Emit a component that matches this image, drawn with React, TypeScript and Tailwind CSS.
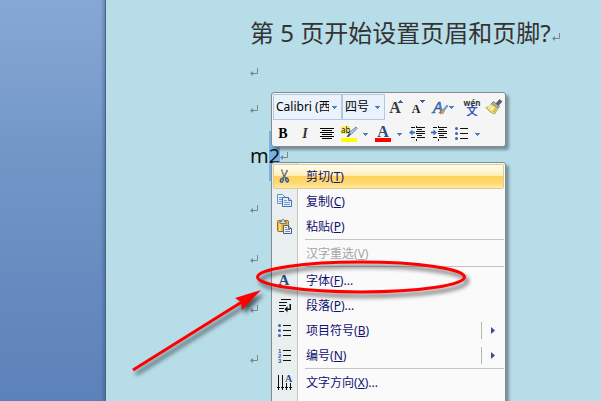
import type { ReactNode } from "react";

type MenuEntry = {
  label: string;
  accessKey: string;
  suffix?: string;
  icon?: ReactNode;
  active?: boolean;
  disabled?: boolean;
  submenu?: boolean;
  separatorAfter?: boolean;
};

function Icon({ children }: { children: ReactNode }) {
  return (
    <svg className="size-4 shrink-0 overflow-visible" viewBox="0 0 16 16" aria-hidden="true">
      {children}
    </svg>
  );
}

function LetterA({ x = 8, y = 12, size = 15, fill = "#2b4a80" }) {
  return (
    <text
      x={x}
      y={y}
      fontSize={size}
      fill={fill}
      textAnchor="middle"
      fontWeight="bold"
      fontFamily="Liberation Serif, serif"
    >
      A
    </text>
  );
}

function Caret() {
  return (
    <svg className="h-[3px] w-[5px] shrink-0" viewBox="0 0 5 3" aria-hidden="true">
      <path d="M0 0h5v1H4v1H3v1H2V2H1V1H0z" fill="#4a7fc0" />
    </svg>
  );
}

function ReturnMark() {
  return (
    <svg className="size-2 shrink-0" viewBox="0 0 8 8" fill="none" aria-hidden="true">
      <path d="M7.500 0v5.500H2" stroke="#7c868b" />
      <path d="M3 3v5L0 5.500z" fill="#7c868b" />
    </svg>
  );
}

/* Toolbar icons */

const GrowIcon = (
  <Icon>
    <LetterA x={7} y={14} size={16} fill="#3a3a3a" />
    <path d="M10 4h5v-1h-1v-1h-1V1h-1v1h-1v1h-1z" fill="#3a5fa8" />
  </Icon>
);

const ShrinkIcon = (
  <Icon>
    <LetterA x={6} y={14} size={12} fill="#222" />
    <path d="M10 1h5v1h-1v1h-1v1h-1V3h-1V2h-1z" fill="#3a5fa8" />
  </Icon>
);

const StyleIcon = (
  <Icon>
    <text
      x="6"
      y="14"
      fontSize="17"
      fontStyle="italic"
      textAnchor="middle"
      fontFamily="Liberation Serif, serif"
      fill="#5b8fd0"
      stroke="#2f5c9e"
      strokeWidth=".6"
    >
      A
    </text>
    <path d="M15 6l1 1-4 5-1.500-1z" fill="#7db0ea" stroke="#2f5c9e" strokeWidth=".5" />
    <path d="M10.500 10.500l2 1.500c0 2-2.500 3-4.500 3 1.500-1 1-3.500 2.500-4.500z" fill="#e5a73a" stroke="#a9772a" strokeWidth=".4" />
  </Icon>
);

const PinyinIcon = (
  <Icon>
    <text
      x="8"
      y="7"
      fontSize="8"
      fontWeight="bold"
      textAnchor="middle"
      fontFamily="Noto Sans, sans-serif"
      fill="#333"
    >
      wén
    </text>
    <text
      x="8"
      y="16"
      fontSize="11"
      textAnchor="middle"
      fontFamily="Noto Sans CJK SC, sans-serif"
      fill="#2340b8"
      stroke="#2340b8"
      strokeWidth=".3"
    >
      文
    </text>
  </Icon>
);

const BrushIcon = (
  <Icon>
    <path d="M13.500 0.500l2.500 2-3.500 4-2.500-2z" fill="#59616e" stroke="#343b48" strokeWidth=".5" />
    <path d="M7.500 2.500l6 5-1.500 2L5.500 4.500z" fill="#a9afba" stroke="#444b59" strokeWidth=".6" />
    <path d="M5.500 4.500L12 9.500 8.500 15C5 14 2 11.500 0 8.500c2.500-.5 4-1.500 5.500-4z" fill="#ecd76c" stroke="#94803c" strokeWidth=".6" />
    <path d="M5 6.500L2.500 9M7.500 8L5 11" stroke="#fffbe0" strokeWidth="1.500" />
    <path d="M10 9.500L7.500 13" stroke="#c9a531" />
  </Icon>
);

const CenterIcon = (
  <Icon>
    <path
      d="M1 2.500h14M3 4.500h10M1 6.500h14M3 8.500h10M1 10.500h14M3 12.500h10"
      stroke="#000"
    />
  </Icon>
);

const HighlightIcon = (
  <Icon>
    <rect width="9" height="8" fill="#f6f264" />
    <text x="0" y="7" fontSize="8" fontFamily="Noto Sans, sans-serif" fill="#111">
      ab
    </text>
    <path d="M15 1l1 1.500-6 6-2-1.500z" fill="#b9d1ec" stroke="#4a6590" strokeWidth=".8" />
    <path d="M8 7L10 8.500 7.500 11H5.500z" fill="#45556b" />
    <rect y="12" width="16" height="4" fill="#ff0" />
  </Icon>
);

const FontColorIcon = (
  <Icon>
    <LetterA y={11} size={16} />
    <rect y="12" width="16" height="4" fill="#f00" />
  </Icon>
);

const indentLines =
  "M7.500 0v2M7.500 13v2M2 1.500h4M8 1.500h8M8 3.500h5M7 5.500h9M7 7.500h9M8 9.500h5M2 11.500h4M8 11.500h8";

const OutdentIcon = (
  <Icon>
    <path d={indentLines} stroke="#111" />
    <path d="M0 6.500L3.500 3.500v2H6v2H3.500v2z" fill="#3d6fc0" />
  </Icon>
);

const IndentIcon = (
  <Icon>
    <path d={indentLines} stroke="#111" />
    <path d="M6 6.500L2.500 3.500v2H0v2h2.500v2z" fill="#3d6fc0" />
  </Icon>
);

const BulletsIcon = (
  <Icon>
    <path d="M7 2.500h8M7 7.500h8M7 12.500h8" stroke="#111" />
    <circle cx="3.500" cy="2.500" r="1.500" fill="#3a63b0" />
    <circle cx="3.500" cy="7.500" r="1.500" fill="#3a63b0" />
    <circle cx="3.500" cy="12.500" r="1.500" fill="#3a63b0" />
  </Icon>
);

/* Menu icons */

const CutIcon = (
  <Icon>
    <path d="M5.500 0.500L8 7l2 2.500M11.500 1L8.500 7 6.500 9.500" fill="none" stroke="#66707e" strokeWidth="1.600" />
    <path d="M6 1.500L8 6" fill="none" stroke="#c7ced8" strokeWidth=".6" />
    <ellipse cx="5.800" cy="11.300" rx="1.300" ry="1.900" transform="rotate(20 5.800 11.300)" fill="none" stroke="#2f5a9c" strokeWidth="1.500" />
    <ellipse cx="11" cy="11" rx="1.300" ry="1.900" transform="rotate(-25 11 11)" fill="none" stroke="#2f5a9c" strokeWidth="1.500" />
  </Icon>
);

const CopyIcon = (
  <Icon>
    <path d="M1.500.5h5l3 3v6h-8z" fill="#e4eefc" stroke="#6f8fc4" />
    <path d="M3 3.500h3M3 5.500h4M3 7.500h4" stroke="#6d96d4" />
    <path d="M6.500 3.500h6l3 3v6h-9z" fill="#e4eefc" stroke="#4a6cab" />
    <path d="M12.500 3.500v3h3" fill="#cfe0f6" stroke="#4a6cab" />
    <path d="M8 6.500h3M8 8.500h6M8 10.500h6" stroke="#6d96d4" />
  </Icon>
);

const PasteIcon = (
  <Icon>
    <rect x="1.500" y="1.500" width="11" height="11" rx="1" fill="#edb23a" stroke="#9c6d1d" />
    <path d="M3 4h2v8H3z" fill="#fbd884" />
    <path d="M4 4.500v-2h1.500C5.500-.5 8.500-.5 8.500 2.500H10v2z" fill="#d5d9df" stroke="#626a76" strokeWidth=".8" />
    <path d="M7.500 6.500h5l3 3v5h-8z" fill="#edf3fe" stroke="#4c5f83" />
    <path d="M12.500 6.500v3h3" fill="#cbd8ec" stroke="#4c5f83" />
    <path d="M9 8.500h2M9 10.500h5M9 12.500h5" stroke="#7289b3" />
  </Icon>
);

const ParagraphIcon = (
  <Icon>
    <path d="M5 1.500h10M3 4.500h8M3 7.500h7M3 10.500h5M3 13.500h5" stroke="#111" />
    <path d="M14.250 6v5.250H11" stroke="#111" strokeWidth="1.500" fill="none" />
    <path d="M11.500 8v6.500L8.500 11.250z" fill="#111" />
  </Icon>
);

const NumberingIcon = (
  <Icon>
    <path d="M7 2.500h8M7 7.500h8M7 12.500h8" stroke="#111" />
    <g fontSize="6" fontWeight="bold" fontFamily="Liberation Sans, sans-serif" fill="#2f58a8">
      <text x="2" y="5">1</text>
      <text x="2" y="10">2</text>
      <text x="2" y="15">3</text>
    </g>
  </Icon>
);

const DirectionIcon = (
  <Icon>
    <path d="M2.500 0v14M6.500 0v14M10.500 8v6M14.500 8v6" stroke="#111" />
    <path d="M1 12h3v1H3v2H2v-2H1zM5 12h3v1H7v2H6v-2H5zM9 12h3v1h-1v2h-1v-2H9zM13 12h3v1h-1v2h-1v-2h-1z" fill="#111" />
    <LetterA x={12.5} y={7} size={10} />
  </Icon>
);

const menuEntries: MenuEntry[] = [
  { label: "剪切", accessKey: "T", icon: CutIcon, active: true },
  { label: "复制", accessKey: "C", icon: CopyIcon },
  { label: "粘贴", accessKey: "P", icon: PasteIcon, separatorAfter: true },
  { label: "汉字重选", accessKey: "V", disabled: true, separatorAfter: true },
  {
    label: "字体",
    accessKey: "F",
    suffix: "...",
    icon: (
      <Icon>
        <LetterA />
      </Icon>
    ),
  },
  { label: "段落", accessKey: "P", suffix: "...", icon: ParagraphIcon },
  { label: "项目符号", accessKey: "B", icon: BulletsIcon, submenu: true },
  { label: "编号", accessKey: "N", icon: NumberingIcon, submenu: true, separatorAfter: true },
  { label: "文字方向", accessKey: "X", suffix: "...", icon: DirectionIcon },
];

function ToolButton({ label, children }: { label: string; children: ReactNode }) {
  return (
    <button type="button" aria-label={label} className="flex h-6 w-[22px] items-center justify-center">
      {children}
    </button>
  );
}

function SplitButton({ label, children }: { label: string; children: ReactNode }) {
  return (
    <button type="button" aria-label={label} className="flex h-6 w-[34px] items-center gap-[6px] pl-[3px]">
      {children}
      <Caret />
    </button>
  );
}

function Combo({ label, value, width }: { label: string; value: string; width: string }) {
  return (
    <label className={`relative block ${width}`}>
      <span className="sr-only">{label}</span>
      <select className="block h-[26px] w-full appearance-none rounded-none border border-[#b1c7e5] bg-[#eaf2fb] pr-3 pl-[2px] text-black outline-none">
        <option>{value}</option>
      </select>
      <span className="pointer-events-none absolute inset-y-0 right-[5px] flex items-center">
        <Caret />
      </span>
    </label>
  );
}

function MiniToolbar() {
  return (
    <div
      role="toolbar"
      aria-label="浮动工具栏"
      className="absolute top-[92px] left-[271px] w-[235px] rounded-[3px] border border-[#868b8d] bg-[#f5f5f5] pt-px text-xs shadow-[3px_3px_3px_rgba(0,0,0,0.35)]"
    >
      <div className="flex items-center pl-px">
        <Combo label="字体" value="Calibri (西文正文)" width="w-[69px]" />
        <Combo label="字号" value="四号" width="w-[43px]" />
        <ToolButton label="增大字体">{GrowIcon}</ToolButton>
        <ToolButton label="缩小字体">{ShrinkIcon}</ToolButton>
        <button type="button" aria-label="样式" className="flex h-6 w-8 items-center gap-px pl-[3px]">
          {StyleIcon}
          <Caret />
        </button>
        <ToolButton label="拼音指南">{PinyinIcon}</ToolButton>
        <ToolButton label="格式刷">{BrushIcon}</ToolButton>
      </div>
      <div className="flex items-center pt-[2px]">
        <ToolButton label="加粗">
          <span className="font-['Liberation_Serif',serif] text-sm font-bold">B</span>
        </ToolButton>
        <ToolButton label="倾斜">
          <span className="font-['Liberation_Serif',serif] text-sm font-bold text-[#333] italic">I</span>
        </ToolButton>
        <ToolButton label="居中">{CenterIcon}</ToolButton>
        <SplitButton label="突出显示">{HighlightIcon}</SplitButton>
        <SplitButton label="字体颜色">{FontColorIcon}</SplitButton>
        <ToolButton label="减少缩进">{OutdentIcon}</ToolButton>
        <ToolButton label="增加缩进">{IndentIcon}</ToolButton>
        <SplitButton label="项目符号">{BulletsIcon}</SplitButton>
      </div>
    </div>
  );
}

function MenuItem({ entry }: { entry: MenuEntry }) {
  const tone = entry.disabled ? "text-[#a5a5a5]" : "text-[#10106e]";
  const surface = entry.active
    ? "rounded-[2px] border-[#dccb94] bg-[linear-gradient(#fffdf3,#ffedb4_48%,#ffd25c_50%,#ffd76e_75%,#ffea9f)]"
    : "border-transparent";

  return (
    <li role="none">
      <button
        type="button"
        role="menuitem"
        disabled={entry.disabled}
        className={`flex h-[25px] w-full items-center border text-left ${tone} ${surface}`}
      >
        <span className="flex w-5 justify-center">{entry.icon}</span>
        <span className="grow pl-3">
          {entry.label}(<u>{entry.accessKey}</u>){entry.suffix}
        </span>
        {entry.submenu && (
          <span className="flex h-[17px] w-[22px] items-center border-l border-[#b7b9a8] pl-[9px]">
            <svg className="h-[7px] w-1" viewBox="0 0 4 7" aria-hidden="true">
              <path d="M0 0l4 3.500L0 7z" fill="#3c4f8c" />
            </svg>
          </span>
        )}
      </button>
      {entry.separatorAfter && <div role="separator" className="ml-8 h-[2px] border-t border-[#c2c3c3]" />}
    </li>
  );
}

function ContextMenu() {
  return (
    <ul
      role="menu"
      className="absolute top-[162px] left-[271px] w-[235px] rounded-[3px] border border-[#868b8d] bg-[linear-gradient(to_right,#e9eeee_25px,#c5c5c5_25px,#c5c5c5_26px,#fafafa_26px)] px-px pt-px pb-8 text-xs shadow-[3px_3px_3px_rgba(0,0,0,0.35)]"
    >
      {menuEntries.map((entry) => (
        <MenuItem key={entry.label} entry={entry} />
      ))}
    </ul>
  );
}

// Red circle round the font entry, with an arrow that points at it
function Annotation() {
  return (
    <svg
      className="pointer-events-none absolute top-0 left-0 h-[401px] w-[601px] drop-shadow-[3px_4px_2px_rgba(0,0,0,0.6)]"
      viewBox="0 0 601 401"
      fill="none"
      aria-hidden="true"
    >
      <ellipse cx="361" cy="277" rx="103.500" ry="15" stroke="#f00" strokeWidth="3" />
      <path d="M133 370L245 300" stroke="#f00" strokeWidth="3" />
      <path d="M261 290L235 298l6 4 1 8z" fill="#f00" />
    </svg>
  );
}

export default function App() {
  return (
    <div className="relative flex h-screen overflow-hidden bg-[#b7dde8] font-['Noto_Sans','Noto_Sans_CJK_SC',sans-serif]">
      <aside className="w-[106px] shrink-0 border-r border-[#536276] bg-[linear-gradient(#86a8d6,#7196c6_40%,#678bc0_70%,#5b82b9)] shadow-[inset_-4px_0_3px_-2px_rgba(40,70,120,0.35)]" />

      <main className="min-w-0 grow pt-3 pl-36">
        <h1 className="flex h-[41px] items-center gap-px text-2xl whitespace-nowrap text-[#333]">
          第 5 页开始设置页眉和页脚?
          <span className="pt-2">
            <ReturnMark />
          </span>
        </h1>
        <p className="flex h-[37px] items-center">
          <ReturnMark />
        </p>
        <p className="flex h-[38px] items-center">
          <ReturnMark />
        </p>
        <p className="flex h-14 items-center text-xl text-[#111]">
          m<span className="flex h-[50px] items-center bg-[#75b2e5]">2</span>
          <ReturnMark />
        </p>
        {["a", "b", "c", "d"].map((key) => (
          <p key={key} className="flex h-[50px] items-center">
            <ReturnMark />
          </p>
        ))}
      </main>

      <MiniToolbar />
      <ContextMenu />
      <Annotation />
    </div>
  );
}
